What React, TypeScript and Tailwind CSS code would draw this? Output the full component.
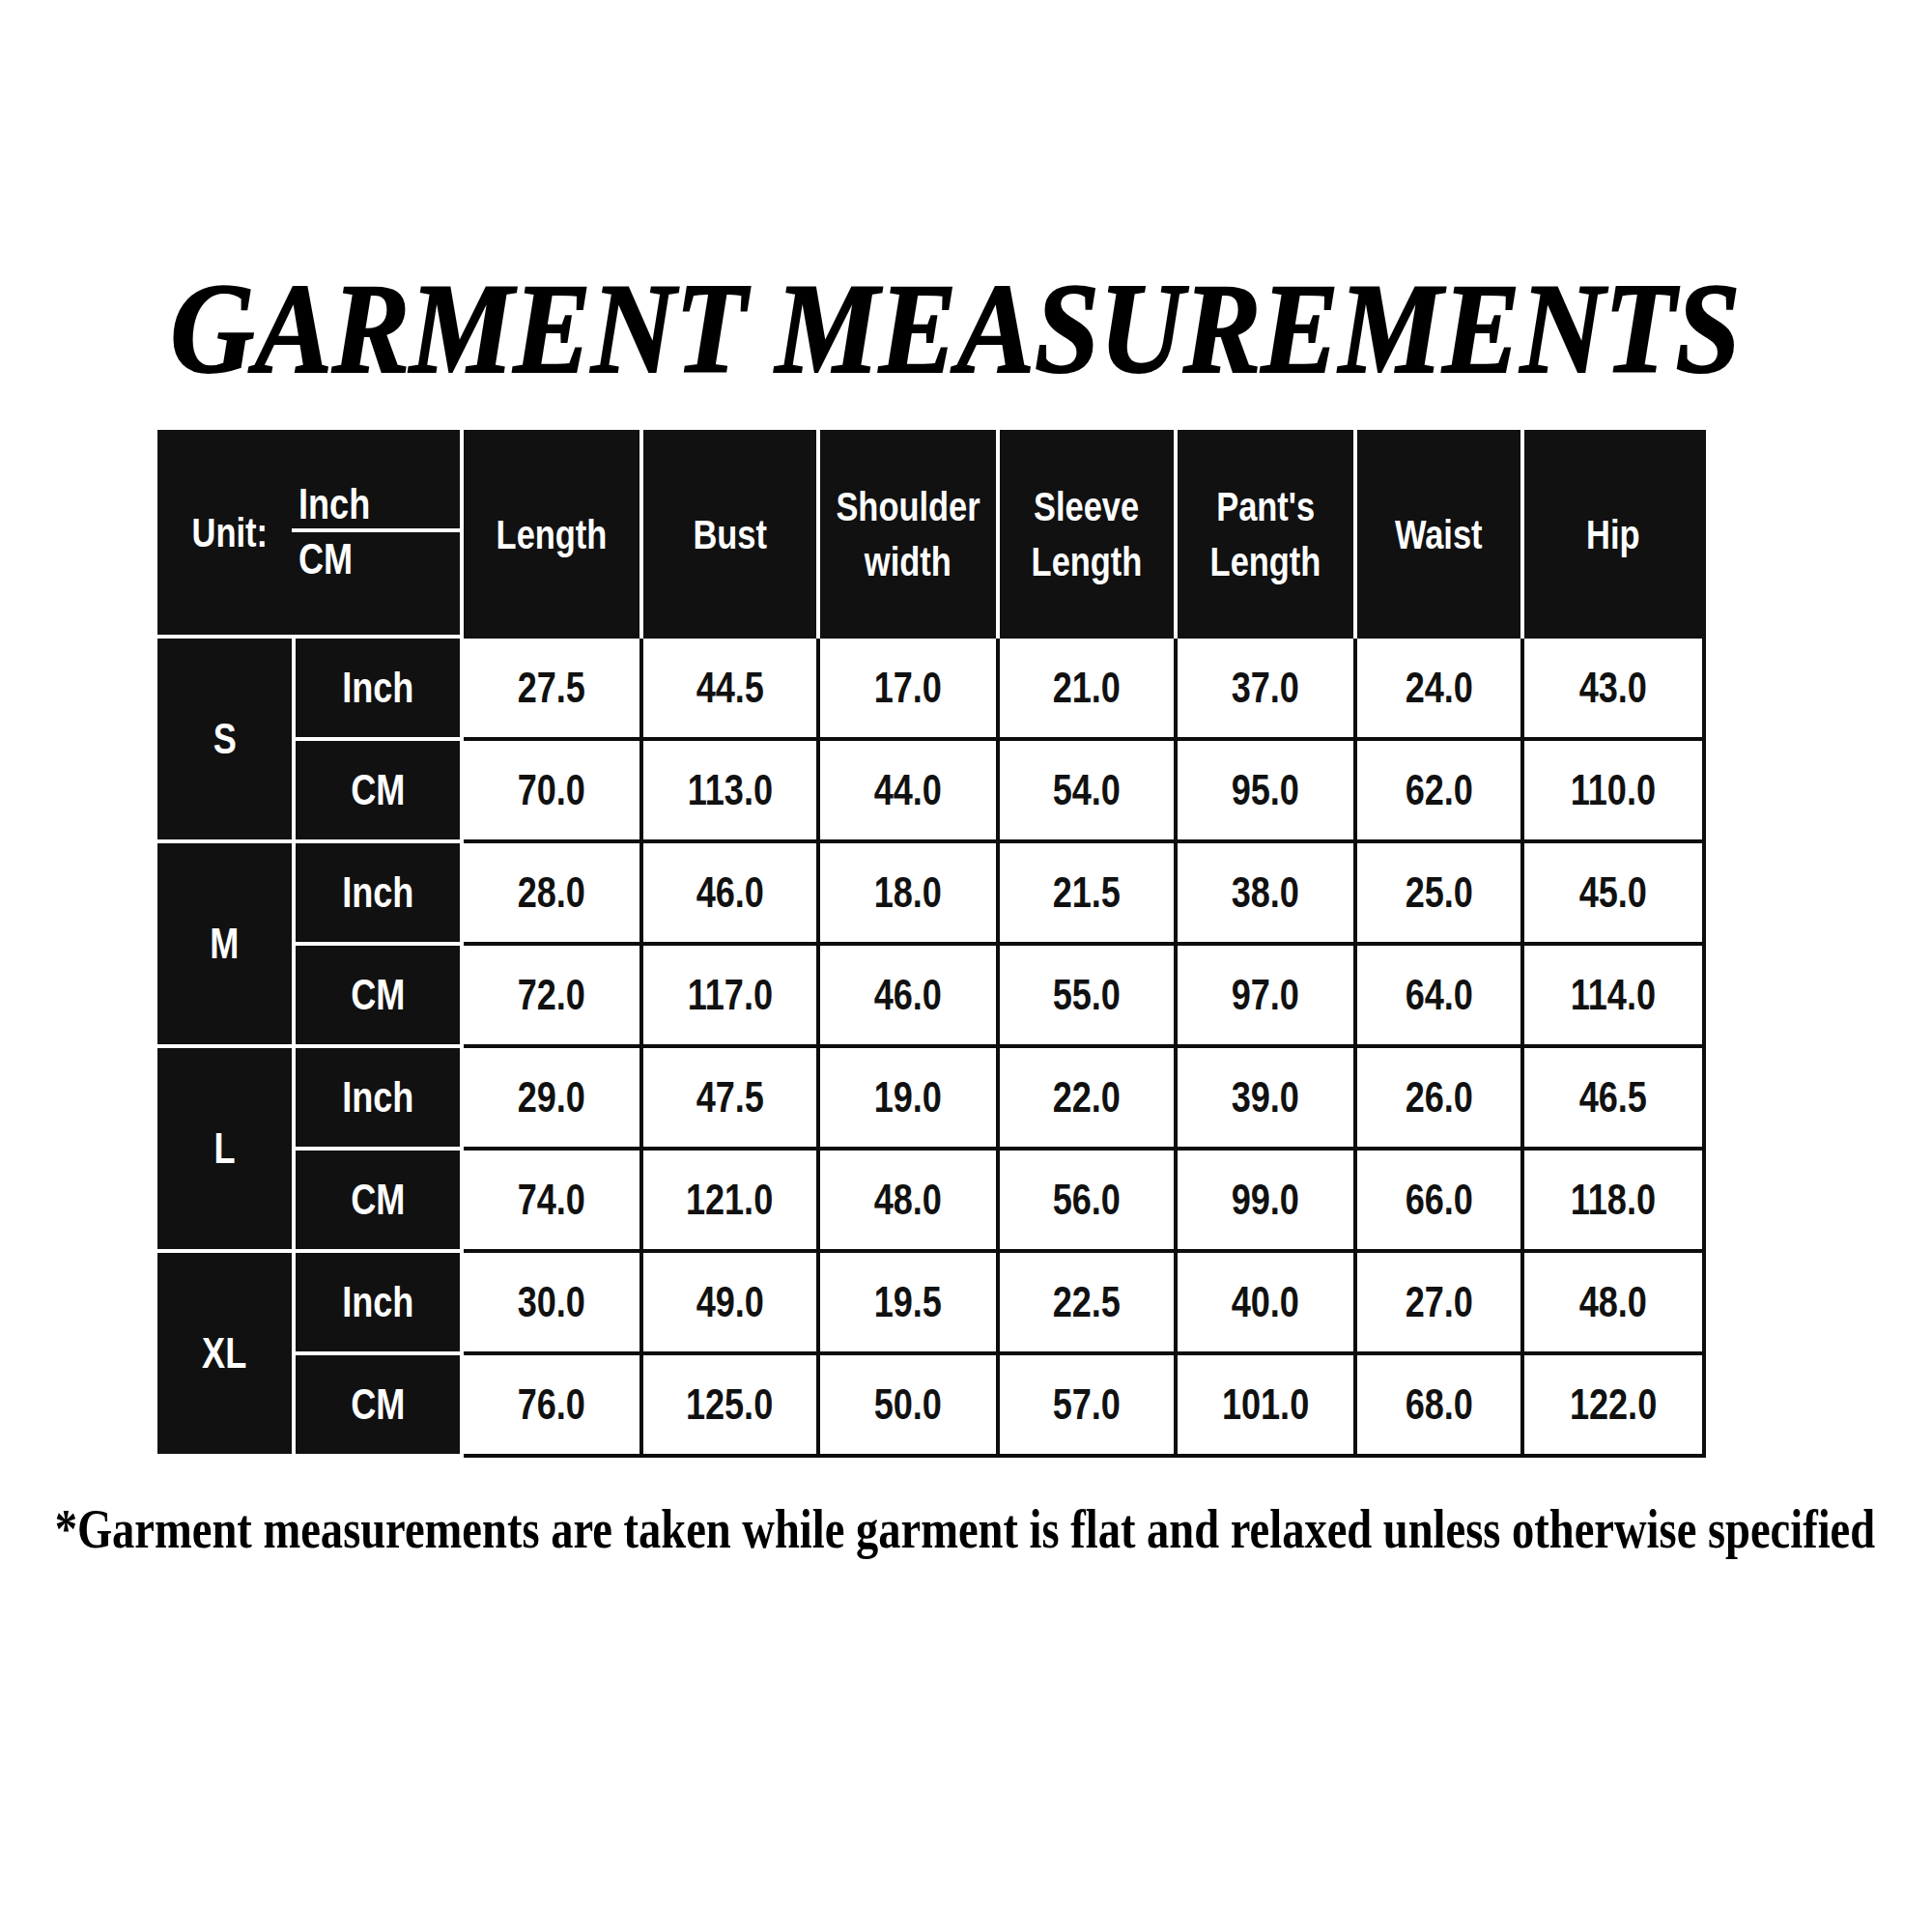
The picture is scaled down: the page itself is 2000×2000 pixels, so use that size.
import React from "react";

const sans = { fontFamily: '"Liberation Sans", Arial, sans-serif' };
const serif = { fontFamily: '"Liberation Serif", "DejaVu Serif", serif' };

const headers: string[][] = [
  ["Length"],
  ["Bust"],
  ["Shoulder", "width"],
  ["Sleeve", "Length"],
  ["Pant's", "Length"],
  ["Waist"],
  ["Hip"],
];

const sizes: { size: string; inch: string[]; cm: string[] }[] = [
  { size: "S", inch: ["27.5", "44.5", "17.0", "21.0", "37.0", "24.0", "43.0"], cm: ["70.0", "113.0", "44.0", "54.0", "95.0", "62.0", "110.0"] },
  { size: "M", inch: ["28.0", "46.0", "18.0", "21.5", "38.0", "25.0", "45.0"], cm: ["72.0", "117.0", "46.0", "55.0", "97.0", "64.0", "114.0"] },
  { size: "L", inch: ["29.0", "47.5", "19.0", "22.0", "39.0", "26.0", "46.5"], cm: ["74.0", "121.0", "48.0", "56.0", "99.0", "66.0", "118.0"] },
  { size: "XL", inch: ["30.0", "49.0", "19.5", "22.5", "40.0", "27.0", "48.0"], cm: ["76.0", "125.0", "50.0", "57.0", "101.0", "68.0", "122.0"] },
];

function N({ children }: { children: React.ReactNode }) {
  return <span className="inline-block scale-x-[0.82] whitespace-nowrap">{children}</span>;
}

function DataCell({ v }: { v: string }) {
  return (
    <div className="bg-white border-r-4 border-b-4 border-[#0d0d0d] flex items-center justify-center text-[44px] font-bold text-[#111]">
      <N>{v}</N>
    </div>
  );
}

export default function App() {
  return (
    <div className="w-[2000px] h-[2000px] bg-white flex flex-col" style={sans}>
      <div
        className="mt-[273px] ml-[172px] w-[1633px] flex justify-center text-[134px] leading-[134px] font-bold italic text-black whitespace-nowrap [-webkit-text-stroke:2px_black]"
        style={serif}
      >
        <span className="inline-block scale-x-[0.9]">GARMENT MEASUREMENTS</span>
      </div>

      <div className="mt-[38px] ml-[163px] w-[1603px] grid grid-cols-[143px_174px_186px_183px_186px_184px_186px_173px_188px] grid-rows-[216px_repeat(8,106px)]">
        <div className="col-span-2 bg-[#111] border-r-4 border-b-4 border-white flex items-center text-white text-[42px] font-bold">
          <div className="w-[139px] pl-[10px] flex justify-center">
            <N>Unit:</N>
          </div>
          <div className="flex-1 flex flex-col pt-[2px]">
            <div className="h-[50px] leading-[50px] pl-[7px] text-[44px]">
              <span className="inline-block scale-x-[0.82] origin-left">Inch</span>
            </div>
            <div className="h-[4px] bg-white"></div>
            <div className="h-[56px] leading-[56px] pl-[7px] text-[44px]">
              <span className="inline-block scale-x-[0.82] origin-left">CM</span>
            </div>
          </div>
        </div>
        {headers.map((h, i) => (
          <div
            key={i}
            className={`bg-[#111] border-r-4 ${i === headers.length - 1 ? "border-[#111]" : "border-white"} flex flex-col items-center justify-center text-white text-[42px] font-bold leading-[57px]`}
          >
            {h.map((l, j) => (
              <div key={j}>
                <N>{l}</N>
              </div>
            ))}
          </div>
        ))}

        {sizes.map((s) => (
          <React.Fragment key={s.size}>
            <div className="row-span-2 bg-[#111] border-r-4 border-b-4 border-white flex items-center justify-center text-white text-[44px] font-bold">
              <N>{s.size}</N>
            </div>
            <div className="bg-[#111] border-r-4 border-b-4 border-white flex items-center justify-center text-white text-[44px] font-bold">
              <N>Inch</N>
            </div>
            {s.inch.map((v, i) => (
              <DataCell key={"i" + i} v={v} />
            ))}
            <div className="bg-[#111] border-r-4 border-b-4 border-white flex items-center justify-center text-white text-[44px] font-bold">
              <N>CM</N>
            </div>
            {s.cm.map((v, i) => (
              <DataCell key={"c" + i} v={v} />
            ))}
          </React.Fragment>
        ))}
      </div>

      <div
        className="mt-[46px] ml-[57px] w-[1883px] flex justify-center text-[56px] leading-[56px] font-bold text-black whitespace-nowrap"
        style={serif}
      >
        <span className="inline-block scale-x-[0.831]">
          *Garment measurements are taken while garment is flat and relaxed unless otherwise specified
        </span>
      </div>
    </div>
  );
}
